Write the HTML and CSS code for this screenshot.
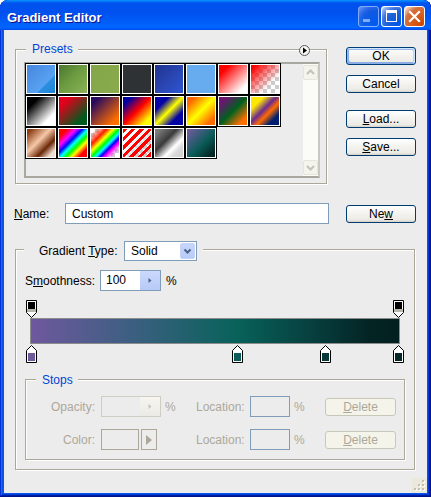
FILE: index.html
```html
<!DOCTYPE html>
<html lang="en">
<head>
<meta charset="utf-8">
<title>Gradient Editor</title>
<link rel="stylesheet" href="styles.css">
</head>
<body>
<div class="window">
  <div class="titlebar">
    <span class="title">Gradient Editor</span>
    <div class="tb-buttons">
      <span class="tb-btn tb-min"><svg width="19" height="19" viewBox="0 0 19 19"><rect x="4" y="12" width="7" height="3" fill="#fff"/></svg></span>
      <span class="tb-btn tb-max"><svg width="19" height="19" viewBox="0 0 19 19"><rect x="4" y="3" width="11" height="3" fill="#fff"/><rect x="4.5" y="3.5" width="10" height="11" fill="none" stroke="#fff"/></svg></span>
      <span class="tb-btn tb-close"><svg width="19" height="19" viewBox="0 0 19 19"><path d="M5 5L14 14M14 5L5 14" stroke="#fff" stroke-width="2.2" stroke-linecap="square"/></svg></span>
    </div>
  </div>
  <div class="client">
    <div class="top-row">
      <div class="group presets">
        <div class="group-head legend">Presets</div>
        <span class="menu-btn"><svg width="11" height="11" viewBox="0 0 11 11"><circle cx="5.5" cy="5.5" r="5" fill="#f4f4f0" stroke="#5a5a5a"/><path d="M4 2.5L8 5.5L4 8.5Z" fill="#000"/></svg></span>
        <div class="preset-list">
          <div class="swatch-grid">
            <div class="sw s1"></div><div class="sw s2"></div><div class="sw s3"></div><div class="sw s4"></div>
            <div class="sw s5"></div><div class="sw s6"></div><div class="sw s7"></div><div class="sw s8 checker"></div>
            <div class="sw s9"></div><div class="sw s10"></div><div class="sw s11"></div><div class="sw s12"></div>
            <div class="sw s13"></div><div class="sw s14"></div><div class="sw s15"></div><div class="sw s16"></div>
            <div class="sw s17"></div><div class="sw s18"></div><div class="sw s19 checker"></div><div class="sw s20 checker"></div>
            <div class="sw s21"></div><div class="sw s22"></div>
          </div>
          <div class="vscroll">
            <span class="sb-btn"><svg width="13" height="13" viewBox="0 0 13 13"><path d="M3 8L6.5 4.5L10 8" fill="none" stroke="#c3c2b6" stroke-width="2"/></svg></span>
            <span class="sb-btn"><svg width="13" height="13" viewBox="0 0 13 13"><path d="M3 5L6.5 8.5L10 5" fill="none" stroke="#c3c2b6" stroke-width="2"/></svg></span>
          </div>
        </div>
      </div>
      <div class="side-buttons">
        <button class="btn default">OK</button>
        <button class="btn">Cancel</button>
        <button class="btn sep"><u>L</u>oad...</button>
        <button class="btn"><u>S</u>ave...</button>
      </div>
    </div>

    <div class="name-row">
      <span class="name-label"><u>N</u>ame:</span>
      <input class="name-input" type="text" value="Custom">
      <button class="btn new-btn">Ne<u>w</u></button>
    </div>

    <div class="group grad-group">
      <div class="group-head type-head">
        <span class="type-label">Gradient <u>T</u>ype:</span>
        <span class="select"><span>Solid</span><span class="select-btn"><svg width="13" height="14" viewBox="0 0 13 14"><path d="M3.5 5.5L6.5 8.5L9.5 5.5" fill="none" stroke="#4d6185" stroke-width="2"/></svg></span></span>
      </div>
      <div class="smooth-row">
        <span class="smooth-label">S<u>m</u>oothness:</span>
        <span class="spin-input"><span class="val">100</span><span class="spin-btn"><svg width="6" height="7" viewBox="0 0 6 7"><path d="M1.5 1L4.5 3.5L1.5 6Z" fill="#4d6185"/></svg></span></span>
        <span class="pct">%</span>
      </div>
      <div class="editor">
        <div class="stop-row">
          <svg class="marker" style="left:-4px" width="11" height="18" viewBox="0 0 11 18"><path d="M0.5 0.5H10.5V12.5L5.5 17.5L0.5 12.5Z" fill="#fff" stroke="#000"/><rect x="2" y="2" width="7" height="7" fill="#000"/><rect x="1" y="9" width="9" height="3" fill="#b9b7ad"/></svg>
          <svg class="marker" style="left:363px" width="11" height="18" viewBox="0 0 11 18"><path d="M0.5 0.5H10.5V12.5L5.5 17.5L0.5 12.5Z" fill="#fff" stroke="#000"/><rect x="2" y="2" width="7" height="7" fill="#000"/><rect x="1" y="9" width="9" height="3" fill="#b9b7ad"/></svg>
        </div>
        <div class="bar"></div>
        <div class="stop-row bottom">
          <svg class="marker" style="left:-4px" width="11" height="18" viewBox="0 0 11 18"><path d="M5.5 0.5L10.5 5.5V17.5H0.5V5.5Z" fill="#fff" stroke="#000"/><rect x="2" y="8" width="7" height="8" fill="#6e5a9c"/></svg>
          <svg class="marker" style="left:202px" width="11" height="18" viewBox="0 0 11 18"><path d="M5.5 0.5L10.5 5.5V17.5H0.5V5.5Z" fill="#fff" stroke="#000"/><rect x="2" y="8" width="7" height="8" fill="#0c5c5a"/></svg>
          <svg class="marker" style="left:290px" width="11" height="18" viewBox="0 0 11 18"><path d="M5.5 0.5L10.5 5.5V17.5H0.5V5.5Z" fill="#fff" stroke="#000"/><rect x="2" y="8" width="7" height="8" fill="#083a3a"/></svg>
          <svg class="marker" style="left:363px" width="11" height="18" viewBox="0 0 11 18"><path d="M5.5 0.5L10.5 5.5V17.5H0.5V5.5Z" fill="#fff" stroke="#000"/><rect x="2" y="8" width="7" height="8" fill="#052828"/></svg>
        </div>
      </div>

      <div class="group stops-group">
        <div class="group-head legend">Stops</div>
        <div class="stop-fields">
          <span class="f-label">Opacity:</span>
          <span class="f-ctrl">
            <span class="f-opacity"><span class="spin-btn dis"><svg width="6" height="7" viewBox="0 0 6 7"><path d="M1.5 1L4.5 3.5L1.5 6Z" fill="#c6c4ba"/></svg></span></span>
            <span class="f-pct-inline">%</span>
          </span>
          <span class="f-loc-label">Location:</span>
          <span class="f-loc"></span>
          <span class="f-pct">%</span>
          <button class="btn disabled"><u>D</u>elete</button>
        </div>
        <div class="stop-fields second">
          <span class="f-label">Color:</span>
          <span class="f-ctrl">
            <span class="f-color"></span>
            <span class="f-arrow"><svg width="8" height="12" viewBox="0 0 8 12"><path d="M1 1L7 6L1 11Z" fill="#aca899"/></svg></span>
          </span>
          <span class="f-loc-label">Location:</span>
          <span class="f-loc"></span>
          <span class="f-pct">%</span>
          <button class="btn disabled"><u>D</u>elete</button>
        </div>
      </div>
    </div>

    <span class="grip"><svg width="15" height="15" viewBox="0 0 15 15">
      <g fill="#fff"><rect x="11" y="3" width="2" height="2"/><rect x="7" y="7" width="2" height="2"/><rect x="11" y="7" width="2" height="2"/><rect x="3" y="11" width="2" height="2"/><rect x="7" y="11" width="2" height="2"/><rect x="11" y="11" width="2" height="2"/></g>
      <g fill="#c2bfb1"><rect x="10" y="2" width="2" height="2"/><rect x="6" y="6" width="2" height="2"/><rect x="10" y="6" width="2" height="2"/><rect x="2" y="10" width="2" height="2"/><rect x="6" y="10" width="2" height="2"/><rect x="10" y="10" width="2" height="2"/></g>
    </svg></span>
  </div>
</div>
</body>
</html>
```

FILE: styles.css
```css
* { box-sizing: border-box; }
html, body { margin: 0; padding: 0; }
body {
  width: 431px;
  height: 497px;
  overflow: hidden;
  background: #ffffff;
  font-family: "Liberation Sans", Arial, sans-serif;
  font-size: 12px;
  color: #000;
}
u { text-decoration: underline; text-underline-offset: 1px; }

.window {
  width: 431px;
  height: 497px;
  display: flex;
  flex-direction: column;
  background: #0a55e8;
  border-radius: 8px 8px 0 0;
  overflow: hidden;
  box-shadow: inset -1px -1px #00138c, inset 1px 1px #0831d9, inset -2px -2px #001ea0, inset 2px 2px #166aee, inset -3px -3px #003bda, inset 3px 3px #0855dd;
}

.titlebar {
  flex: none;
  height: 30px;
  display: flex;
  align-items: flex-start;
  justify-content: space-between;
  padding: 0 6px 0 7px;
  border-radius: 8px 8px 0 0;
  background: linear-gradient(180deg, #0997ff 0%, #0053ee 10%, #0050ee 40%, #0060fa 80%, #0066ff 90%, #005bff 95%, #0048e0 100%);
}
.title {
  margin-top: 10px;
  line-height: 15px;
  color: #fff;
  font-weight: bold;
  font-size: 13px;
  text-shadow: 1px 1px #0f1089;
}
.tb-buttons { display: flex; gap: 2px; margin-top: 6px; }
.tb-btn {
  display: block;
  width: 21px;
  height: 21px;
  border: 1px solid #fff;
  border-radius: 3px;
}
.tb-btn svg { display: block; }
.tb-min, .tb-max {
  background: radial-gradient(circle at 90% 90%, #0054e9 0%, #2263d5 55%, #4479e4 70%, #a3bbec 90%, #fff 100%);
}
.tb-min { opacity: 0.5; }
.tb-close {
  background: radial-gradient(circle at 90% 90%, #cc4600 0%, #dc6527 55%, #cd7546 70%, #ffccb2 90%, #fff 100%);
}

.client {
  flex: 1;
  margin: 0 4px 4px 4px;
  background: #ececec;
  position: relative;
}

/* group boxes */
.group {
  border: 1px solid #aca899;
  box-shadow: inset 1px 1px #fff, 1px 1px #fff;
}
.group-head {
  width: max-content;
  display: flex;
  align-items: center;
  background: #ececec;
}
.legend {
  height: 14px;
  line-height: 14px;
  color: #0046d5;
}

.top-row { display: flex; align-items: flex-start; }

.presets {
  position: relative;
  width: 312px;
  margin: 19px 0 0 11px;
  padding: 0 0 5px 8px;
}
.presets .group-head { margin: -8px 0 0 2px; padding: 0 5px 0 6px; }
.menu-btn { position: absolute; left: 283px; top: -5px; width: 11px; height: 11px; }
.menu-btn svg { display: block; }

.preset-list {
  margin-top: 6px;
  width: 296px;
  height: 116px;
  border: 2px solid;
  border-color: #a8a8a0 #c8c8c0 #a8a8a0 #a8a8a0;
  background: #ececec;
  display: flex;
  justify-content: space-between;
}
.swatch-grid {
  display: grid;
  grid-template-columns: repeat(8, 30px);
  grid-auto-rows: 30px;
  gap: 2px;
  align-content: start;
}
.sw { border: 1px solid #fff; box-shadow: 0 0 0 1px #000; }
.checker {
  background-color: #fff;
}
.s1 { background: linear-gradient(135deg, #4785de 0%, #58a2f1 66%, #2d8fe0 69%, #1b84d6 100%); }
.s2 { background: linear-gradient(135deg, #4a772f 0%, #6b9a40 45%, #8cb456 100%); }
.s3 { background: linear-gradient(135deg, #83a648 0%, #89ab4d 100%); }
.s4 { background: #2f3234; }
.s5 { background: linear-gradient(135deg, #1f338f 0%, #2a45b0 50%, #2c56d4 100%); }
.s6 { background: #68acf0; }
.s7 { background: linear-gradient(135deg, #ff0000 18%, #ffffff 85%); }
.s8 { background: linear-gradient(135deg, #ff0000 8%, rgba(255,0,0,0) 70%), conic-gradient(#cccccc 25%, #ffffff 0 50%, #cccccc 0 75%, #ffffff 0) 0 0 / 8px 8px; }
.s9 { background: linear-gradient(135deg, #000 22%, #fff 78%); }
.s10 { background: linear-gradient(135deg, #e2001c 20%, #005a1e 80%); }
.s11 { background: linear-gradient(135deg, #290a5e 15%, #ff6f00 85%); }
.s12 { background: linear-gradient(135deg, #0000a0 15%, #ff0000 50%, #ffff00 85%); }
.s13 { background: linear-gradient(135deg, #0505a5 25%, #ffff00 50%, #0505a5 75%); }
.s14 { background: linear-gradient(135deg, #ff6a00 15%, #ffff00 50%, #ff6a00 85%); }
.s15 { background: linear-gradient(135deg, #6a1570 15%, #00601e 50%, #ff6e00 85%); }
.s16 { background: linear-gradient(135deg, #ffe800 22%, #6a2a90 45%, #ff6a00 60%, #00206f 80%); }
.s17 { background: linear-gradient(135deg, #8b3c12 8%, #f5c8a8 42%, #6b2808 68%, #f0dcd0 88%); }
.s18 { background: linear-gradient(135deg, #ff0000 15%, #ff00ff 30%, #0000ff 42%, #00ffff 52%, #00ff00 62%, #ffff00 72%, #ff0000 85%); }
.s19 { background: linear-gradient(135deg, rgba(255,0,0,0) 8%, #ff2000 28%, #ffff00 40%, #00ff00 50%, #00ffff 58%, #0000ff 66%, #ff00ff 74%, rgba(255,0,255,0) 88%), conic-gradient(#cccccc 25%, #ffffff 0 50%, #cccccc 0 75%, #ffffff 0) 0 0 / 8px 8px; }
.s20 { background: repeating-linear-gradient(135deg, #ff0000 0 3px, rgba(255,0,0,0) 3px 6px), linear-gradient(135deg, #fff 35%, rgba(255,255,255,0) 70%), conic-gradient(#cccccc 25%, #ffffff 0 50%, #cccccc 0 75%, #ffffff 0) 0 0 / 8px 8px; }
.s21 { background: linear-gradient(135deg, #7a7a7a 10%, #3a3a3a 40%, #ffffff 66%, #d8d8d8 80%, #d0d0d0 100%); }
.s22 { background: linear-gradient(135deg, #6e5a9c 5%, #0a5c57 55%, #042525 90%); }

.vscroll {
  width: 15px;
  height: 100%;
  background: #fbfbf8;
  display: flex;
  flex-direction: column;
  justify-content: space-between;
  padding: 1px 0 1px 0;
}
.sb-btn {
  width: 15px;
  height: 15px;
  border: 1px solid #e6e5dc;
  border-radius: 2px;
  background: #f4f3ee;
  display: flex;
  align-items: center;
  justify-content: center;
}
.sb-btn svg { display: block; }

/* buttons */
.btn {
  width: 70px;
  height: 18px;
  padding: 0;
  margin: 0;
  display: flex;
  align-items: center;
  justify-content: center;
  font: 12px "Liberation Sans", Arial, sans-serif;
  color: #000;
  border: 1px solid #003c74;
  border-radius: 3px;
  background: linear-gradient(180deg, #ffffff 0%, #f3f2ee 50%, #ecebe6 86%, #d6d0c5 100%);
}
.btn.default {
  box-shadow: inset -1px 1px #cee7ff, inset 1px 2px #98b8ea, inset -2px 2px #bcd4f6, inset 1px -1px #89ade4, inset 2px -2px #89ade4;
}
.btn.disabled {
  width: 71px;
  color: #aca899;
  border-color: #c9c7ba;
  background: #f5f4ea;
}
.side-buttons {
  display: flex;
  flex-direction: column;
  margin: 17px 0 0 19px;
}
.side-buttons .btn + .btn { margin-top: 10px; }
.side-buttons .btn.sep { margin-top: 17px; }

/* name row */
.name-row {
  display: flex;
  align-items: center;
  height: 21px;
  margin-top: 19px;
}
.name-label { width: 51px; margin-left: 10px; }
.name-input {
  width: 264px;
  height: 21px;
  margin: 0;
  border: 1px solid #7f9db9;
  background: #fff;
  padding: 0 0 0 6px;
  font: 12px "Liberation Sans", Arial, sans-serif;
  color: #000;
  outline: none;
}
.new-btn { margin-left: 17px; }

/* gradient group */
.grad-group {
  width: 400px;
  margin: 25px 0 0 11px;
  padding: 0 0 9px 0;
}
.type-head {
  height: 20px;
  margin: -9px 0 0 8px;
  padding: 0 6px 0 15px;
}
.type-label { width: 80px; }
.select {
  width: 73px;
  height: 20px;
  margin-left: 5px;
  border: 1px solid #7f9db9;
  background: #fff;
  display: flex;
  align-items: center;
  justify-content: space-between;
  padding-left: 6px;
}
.select-btn {
  width: 15px;
  height: 16px;
  margin-right: 1px;
  border: 1px solid #c4d3f7;
  border-radius: 2px;
  background: linear-gradient(180deg, #c6d5fb 0%, #b8cbf7 100%);
  display: flex;
  align-items: center;
  justify-content: center;
}
.select-btn svg, .spin-btn svg, .f-arrow svg { display: block; }

.smooth-row {
  display: flex;
  align-items: center;
  height: 21px;
  margin-top: 9px;
  padding-left: 9px;
}
.smooth-label { width: 75px; }
.spin-input {
  width: 61px;
  height: 21px;
  border: 1px solid #7f9db9;
  background: #fff;
  display: flex;
}
.spin-input .val { flex: 1; padding-left: 5px; line-height: 19px; }
.spin-btn {
  width: 20px;
  height: 19px;
  background: linear-gradient(180deg, #cbd9fc 0%, #b7c9f6 100%);
  display: flex;
  align-items: center;
  justify-content: center;
}
.spin-btn.dis { background: linear-gradient(180deg, #f6f5f0 0%, #ebeae4 100%); }
.pct { margin-left: 5px; }

.editor { margin: 9px 0 0 14px; width: 370px; }
.stop-row { position: relative; height: 18px; }
.stop-row.bottom { height: 19px; }
.marker { position: absolute; top: 0; display: block; }
.stop-row.bottom .marker { top: 1px; }
.bar {
  height: 26px;
  border: 1px solid #8c8c8c;
  background: linear-gradient(90deg, #6f589e 0%, #3b5f80 28%, #08625a 56%, #073c3c 78%, #042424 92%, #032020 100%);
}

/* stops group */
.stops-group {
  width: 380px;
  margin: 16px 0 0 9px;
  padding: 0 0 9px 0;
}
.stops-group .group-head { margin: -7px 0 0 10px; padding: 0 5px 0 6px; }
.stop-fields {
  display: flex;
  align-items: center;
  height: 21px;
  margin-top: 9px;
  color: #aca899;
}
.stop-fields.second { margin-top: 12px; }
.f-label { width: 69px; text-align: right; }
.f-ctrl { width: 95px; margin-left: 6px; display: flex; align-items: center; }
.f-opacity {
  width: 60px;
  height: 21px;
  border: 1px solid #cfcdc2;
  background: #ececec;
  display: flex;
  justify-content: flex-end;
}
.f-pct-inline { margin-left: 4px; }
.f-color {
  width: 38px;
  height: 21px;
  border: 1px solid #aca899;
  background: #ececec;
}
.f-arrow {
  width: 16px;
  height: 21px;
  margin-left: 2px;
  border: 1px solid #aca899;
  background: #ececec;
  display: flex;
  align-items: center;
  justify-content: center;
}
.f-loc-label { width: 49px; }
.f-loc {
  width: 40px;
  height: 21px;
  margin-left: 5px;
  border: 1px solid #7f9db9;
  background: #ececec;
}
.f-pct { width: 35px; padding-left: 4px; }

.grip {
  position: absolute;
  right: 0;
  bottom: 0;
  width: 15px;
  height: 15px;
  background: #ebe9dc;
}
.grip svg { display: block; }
```
